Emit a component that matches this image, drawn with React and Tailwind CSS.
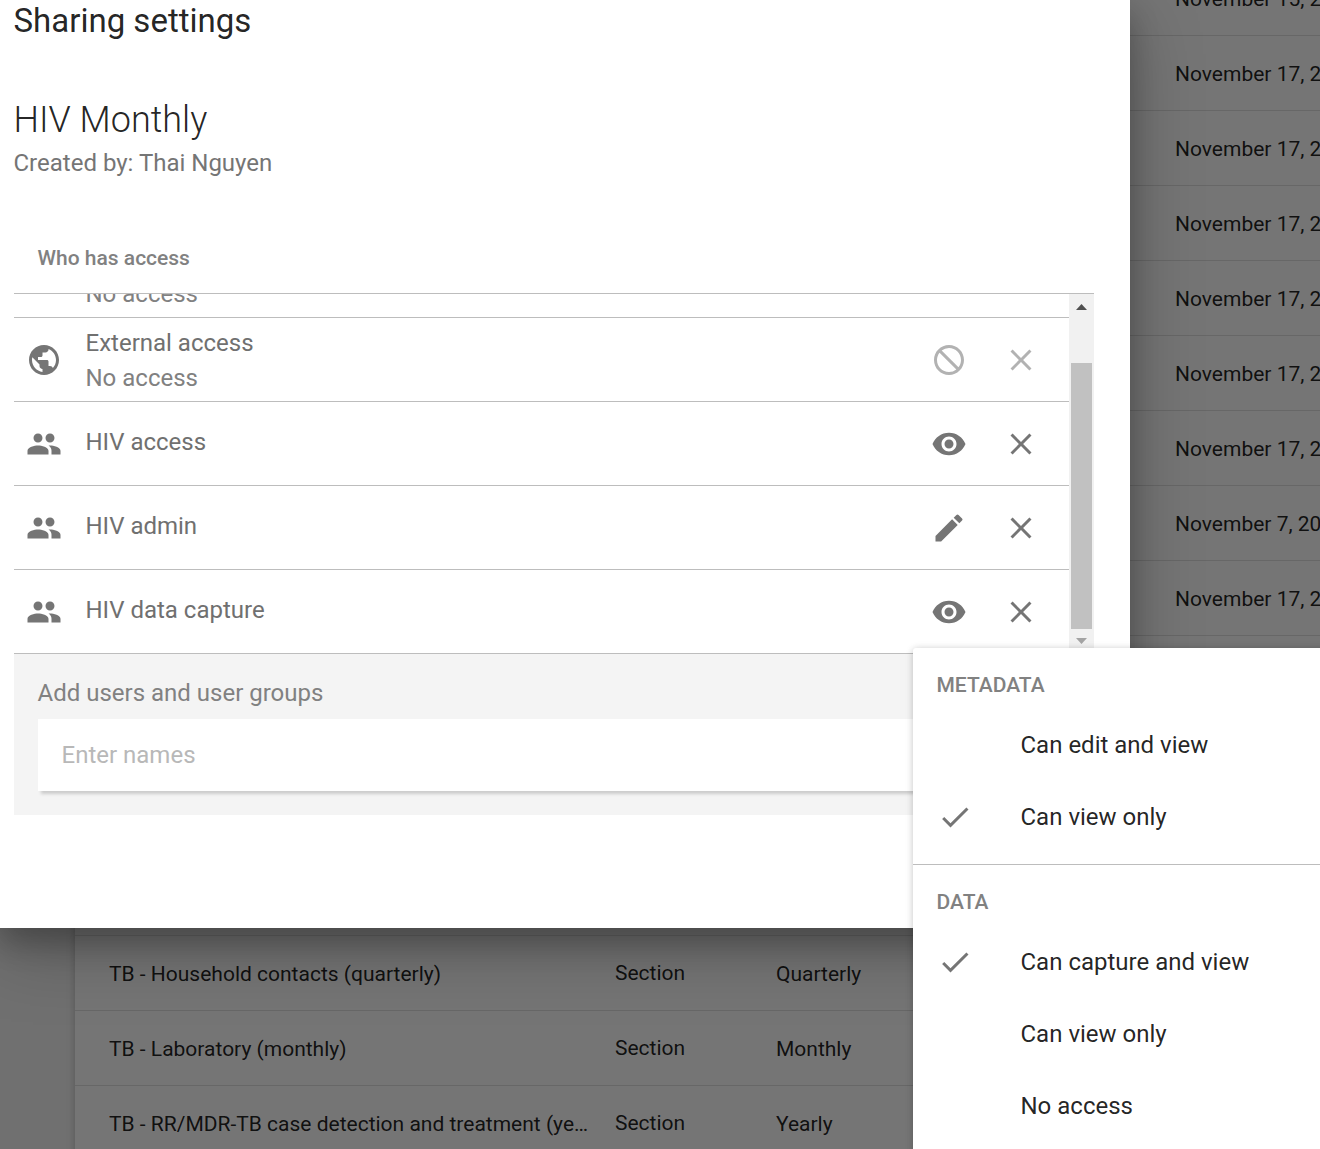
import React from "react";
import {
  MdPublic,
  MdPeople,
  MdNotInterested,
  MdClear,
  MdRemoveRedEye,
  MdCreate,
  MdCheck,
} from "react-icons/md";

const rows = [
  { date: "November 15, 2017" },
  { date: "November 17, 2017" },
  { date: "November 17, 2017" },
  { date: "November 17, 2017" },
  { date: "November 17, 2017" },
  { date: "November 17, 2017" },
  { date: "November 17, 2017" },
  { date: "November 7, 2017" },
  { date: "November 17, 2017" },
  {},
  {},
  {},
  {},
  { name: "TB - Household contacts (quarterly)", type: "Section", period: "Quarterly" },
  { name: "TB - Laboratory (monthly)", type: "Section", period: "Monthly" },
  { name: "TB - RR/MDR-TB case detection and treatment (yearly)", type: "Section", period: "Yearly" },
];

function DataSetTable() {
  return (
    <div className="-mt-[39px] ml-[75px] w-[1400px] bg-white shadow-[0_1.5px_9px_rgba(0,0,0,0.12),0_1.5px_6px_rgba(0,0,0,0.12)]">
      {rows.map((row, i) => (
        <div
          key={i}
          className="flex h-[75px] items-center border-b border-[#e0e0e0] pt-[3px] pl-[34px] text-[21px] text-black/87"
        >
          <div className="w-[506px] shrink-0 pr-[26px]">
            <div className="truncate">{row.name}</div>
          </div>
          <div className="w-[161px] shrink-0 pb-[2px]">{row.type}</div>
          <div className="w-[399px] shrink-0">{row.period}</div>
          <div className="whitespace-nowrap">{row.date}</div>
        </div>
      ))}
    </div>
  );
}

function AccessRow({ icon: Icon, name, status, mode: Mode, disabled }) {
  return (
    <div className="flex h-[84px] shrink-0 items-start border-b border-[#bdbdbd] pl-3">
      <Icon className="mt-6 size-9 shrink-0 text-[#757575]" />
      <div className="ml-[23.5px] flex-1 pt-2 text-2xl leading-[35px]">
        <div className={status ? "h-[35px] text-[#707070]" : "pt-[15px] text-[#707070]"}>{name}</div>
        {status && <div className="text-[#818181]">{status}</div>}
      </div>
      <div
        className={
          disabled
            ? "mt-6 mr-[30px] flex gap-9 text-[#b2b2b2]"
            : "mt-6 mr-[30px] flex gap-9 text-[#757575]"
        }
      >
        <Mode className="size-9" />
        <MdClear className="size-9" />
      </div>
    </div>
  );
}

function ScrollBar() {
  return (
    <div className="flex w-[25px] shrink-0 flex-col items-center bg-[#f1f1f1]">
      <svg className="mt-[10px] h-[6px] w-[11px]" viewBox="0 0 11 6">
        <path d="M5.5 0 11 6H0z" fill="#505050" />
      </svg>
      <div className="mt-[53px] h-[266px] w-[21px] bg-[#c1c1c1]" />
      <svg className="mt-[9px] h-[6px] w-[11px]" viewBox="0 0 11 6">
        <path d="M0 0H11L5.5 6z" fill="#a3a3a3" />
      </svg>
    </div>
  );
}

function SharingDialog() {
  return (
    <div className="absolute top-0 left-0 h-[928px] w-[1130px] bg-white px-[14px] shadow-[0_21px_67px_rgba(0,0,0,0.25),0_15px_27px_rgba(0,0,0,0.22)]">
      <h1 className="-ml-[0.5px] text-[33px] leading-[42px] text-black/87">Sharing settings</h1>
      <h2 className="mt-[56px] -ml-[0.5px] text-[36px] leading-[44px] font-light text-black/87">
        HIV Monthly
      </h2>
      <div className="mt-[3px] -ml-[0.5px] text-2xl leading-[36px] text-[#757575]">
        Created by: Thai Nguyen
      </div>
      <div className="mt-[62px] pl-[23.5px] text-[21px] leading-[30px] font-medium text-[#818181]">
        Who has access
      </div>
      <div className="mt-5 flex h-[361px] w-[1080px] overflow-hidden border-t border-[#bdbdbd]">
        <div className="flex h-[360px] flex-1 flex-col justify-end overflow-hidden">
          <AccessRow icon={MdPublic} status="No access" mode={MdNotInterested} />
          <AccessRow icon={MdPublic} name="External access" status="No access" mode={MdNotInterested} disabled />
          <AccessRow icon={MdPeople} name="HIV access" mode={MdRemoveRedEye} />
          <AccessRow icon={MdPeople} name="HIV admin" mode={MdCreate} />
          <AccessRow icon={MdPeople} name="HIV data capture" mode={MdRemoveRedEye} />
        </div>
        <ScrollBar />
      </div>
      <div className="h-[161px] w-[1080px] bg-[#f4f4f4] px-6 pt-5">
        <div className="-ml-[0.5px] text-2xl leading-[38px] text-[#818181]">Add users and user groups</div>
        <div className="mt-[7px] flex h-[72px] items-center bg-white pl-[23.5px] text-2xl text-[#b8b8b8] shadow-[3px_3px_3px_#cccccc]">
          Enter names
        </div>
      </div>
    </div>
  );
}

function MenuItem({ label, checked }) {
  return (
    <div className="flex h-[72px] items-center pl-6">
      <div className="w-[83.5px]">{checked && <MdCheck className="size-9 text-[#757575]" />}</div>
      <div className="text-2xl text-black/87">{label}</div>
    </div>
  );
}

function MenuHeading({ children }) {
  return (
    <div className="h-[61px] pt-[22px] pl-[23.5px] text-[21px] leading-[30px] font-medium text-[#818181]">
      {children}
    </div>
  );
}

function AccessMenu() {
  return (
    <div className="absolute top-[648px] left-[913px] h-[560px] w-[450px] rounded-[3px] bg-white shadow-[0_1.5px_9px_rgba(0,0,0,0.12),0_1.5px_6px_rgba(0,0,0,0.12)]">
      <MenuHeading>METADATA</MenuHeading>
      <MenuItem label="Can edit and view" />
      <MenuItem label="Can view only" checked />
      <div className="mt-[11px] border-t border-[#bdbdbd]" />
      <MenuHeading>DATA</MenuHeading>
      <MenuItem label="Can capture and view" checked />
      <MenuItem label="Can view only" />
      <MenuItem label="No access" />
    </div>
  );
}

export default function App() {
  return (
    <div className="relative flow-root h-[1149px] w-[1320px] overflow-hidden bg-[#f3f3f3] font-['Roboto',sans-serif]">
      <DataSetTable />
      <div className="absolute inset-0 bg-black/54" />
      <SharingDialog />
      <AccessMenu />
    </div>
  );
}
